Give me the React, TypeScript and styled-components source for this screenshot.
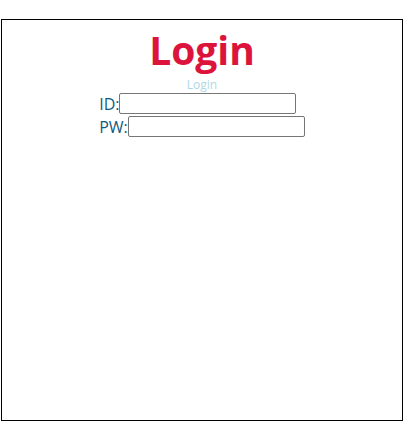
import React from 'react';
import styled, { createGlobalStyle } from 'styled-components';

const GlobalStyle = createGlobalStyle`
  body {
    margin: 0;
    padding: 19px 0 0 1px;
    font-family: 'Open Sans', 'Noto Sans', sans-serif;
  }
`;

const App = () => {
  return (
    <>
      <GlobalStyle />
      <Frame>
        <Title>Login</Title>
        <SubTitle>Login</SubTitle>
        <Form>
          <Row>
            <label className='label'>ID:</label>
            <StyledInput name='id' />
          </Row>
          <Row>
            <label className='label'>PW:</label>
            <StyledInput type='password' name='pw' />
          </Row>
        </Form>
      </Frame>
    </>
  );
};

const Frame = styled.div`
  box-sizing: border-box;
  width: 402px;
  height: 402px;
  border: 1px solid #000;
  display: flex;
  flex-direction: column;
  align-items: center;
`;

const Title = styled.h1`
  margin: 6px 0 2px;
  color: crimson;
  font-size: 39px;
  font-weight: bold;
  line-height: 48px;
`;

const SubTitle = styled.div`
  color: lightblue;
  font-size: 12px;
  line-height: 17px;
`;

const Form = styled.form`
  display: flex;
  flex-direction: column;
  align-items: flex-start;
  gap: 2px;
`;

const Row = styled.div`
  display: flex;
  align-items: center;
  height: 21px;

  .label {
    color: #0e5a80;
    font-size: 16px;
  }
`;

const StyledInput = styled.input`
  box-sizing: border-box;
  width: 177px;
  height: 21px;
  margin: 0;
  padding: 1px 2px;
  border: 1px solid #767676;
  border-radius: 2px;
  outline: none;
`;

export default App;
